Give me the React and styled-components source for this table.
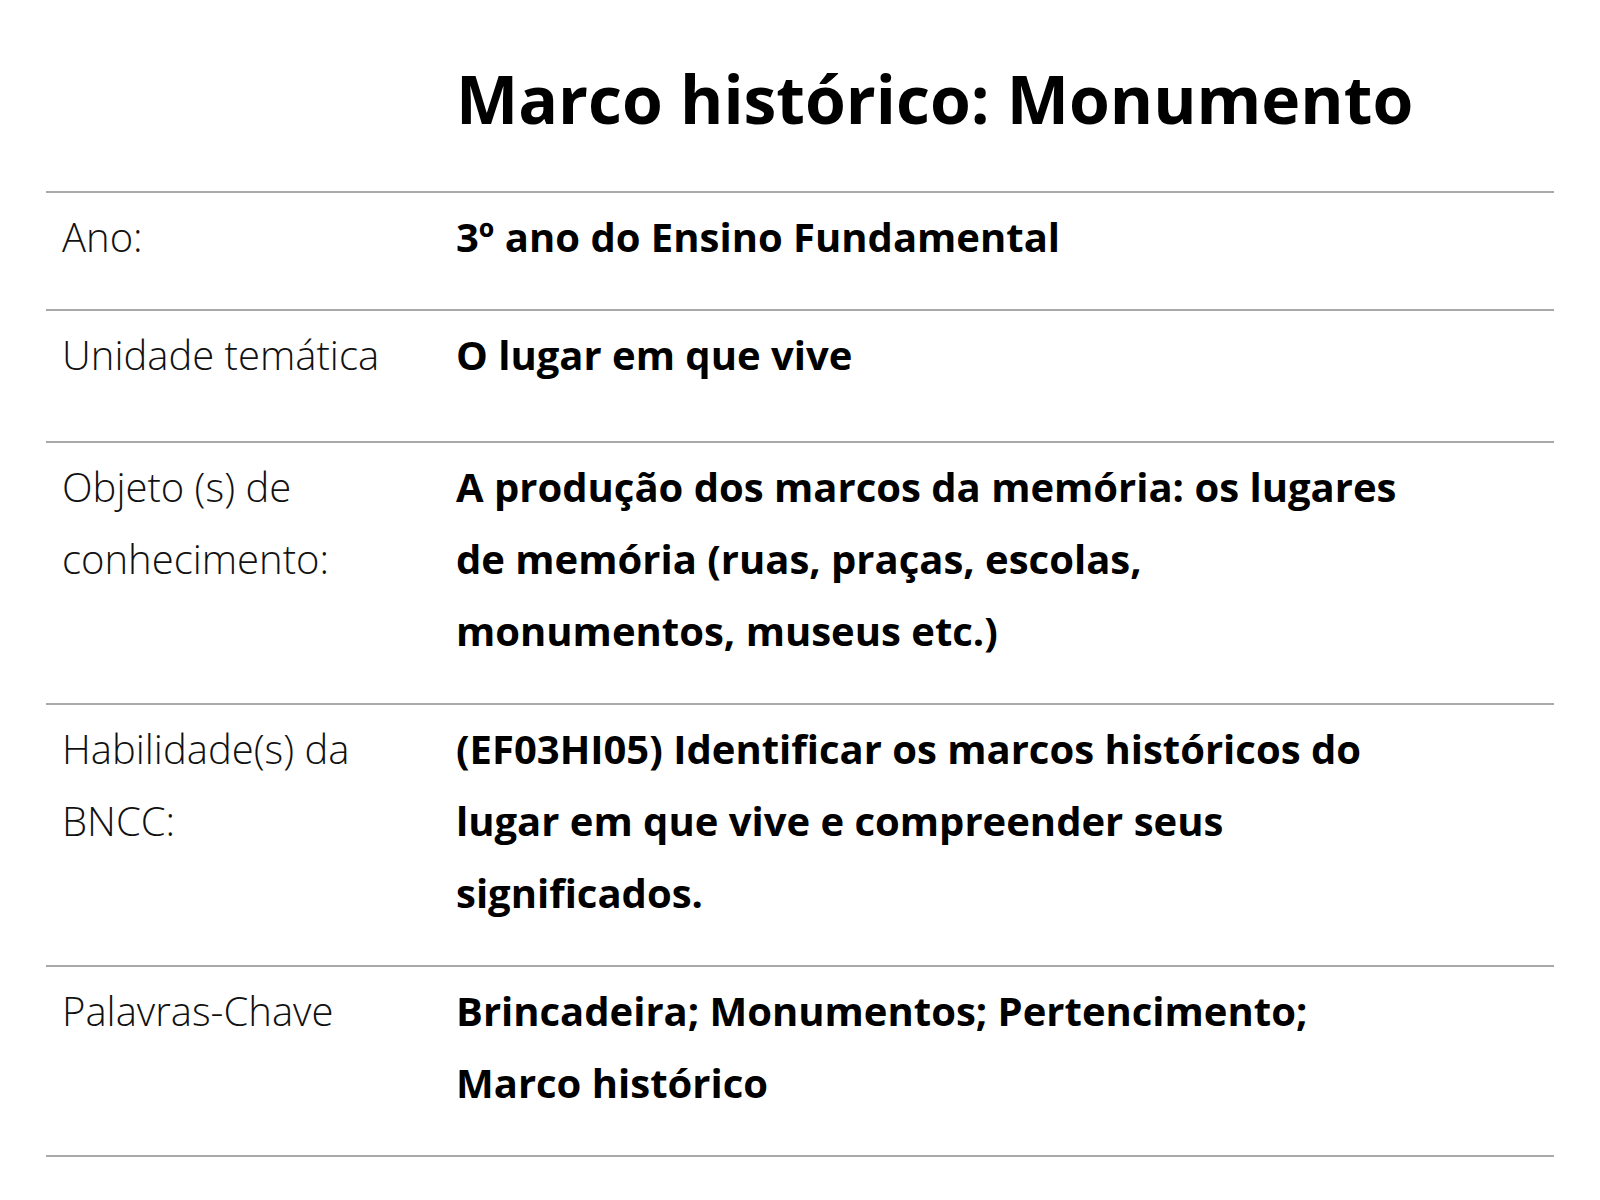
import React from 'react';
import styled, { createGlobalStyle } from 'styled-components';

const GlobalStyle = createGlobalStyle`
  html, body {
    margin: 0;
    padding: 0;
    background: #ffffff;
  }
  body {
    font-family: "Open Sans", "Noto Sans", sans-serif;
    color: #000;
  }
`;

const Page = styled.div`
  width: 1508px;
  padding: 0 46px;
`;

const Title = styled.h1`
  margin: 0;
  padding: 59px 0 53px 410px;
  font-size: 66px;
  line-height: 1.2;
  font-weight: 700;
  white-space: nowrap;
`;

const Table = styled.div`
  display: grid;
  grid-template-columns: 410px 1fr;
  border-top: 2px solid #a9a9a9;
`;

const Row = styled.div`
  display: contents;
`;

const Cell = styled.div`
  padding: 8px 0 ${p => 36 + (p.$extra || 0)}px;
  border-bottom: 2px solid #a9a9a9;
  font-size: 40px;
  line-height: 72px;
`;

const Label = styled(Cell)`
  padding-left: 16px;
  padding-right: 30px;
  font-weight: 300;
  color: #111;
`;

const Value = styled(Cell)`
  padding-right: 154px;
  font-weight: 700;
`;

const rows = [
  { label: 'Ano:', value: '3º ano do Ensino Fundamental' },
  { label: 'Unidade temática', value: 'O lugar em que vive', extra: 14 },
  {
    label: 'Objeto (s) de conhecimento:',
    value: 'A produção dos marcos da memória: os lugares de memória (ruas, praças, escolas, monumentos, museus etc.)',
  },
  {
    label: 'Habilidade(s) da BNCC:',
    value: '(EF03HI05) Identificar os marcos históricos do lugar em que vive e compreender seus significados.',
  },
  { label: 'Palavras-Chave', value: 'Brincadeira; Monumentos; Pertencimento; Marco histórico' },
];

const App = () => (
  <>
    <GlobalStyle />
    <Page>
      <Title>Marco histórico: Monumento</Title>
      <Table>
        {rows.map(r => (
          <Row key={r.label}>
            <Label $extra={r.extra}>{r.label}</Label>
            <Value $extra={r.extra}>{r.value}</Value>
          </Row>
        ))}
      </Table>
    </Page>
  </>
);

export default App;
